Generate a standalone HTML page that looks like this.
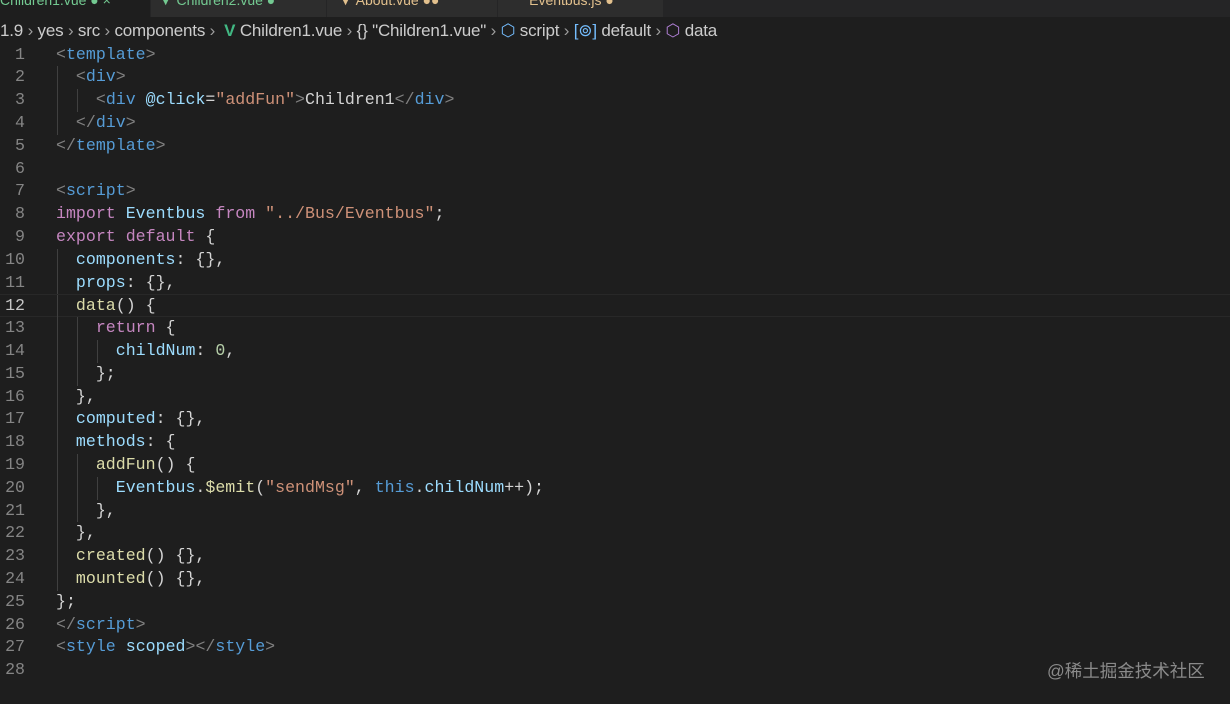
<!DOCTYPE html>
<html><head><meta charset="utf-8"><style>
body{margin:0;width:1230px;height:704px;background:#1e1e1e;overflow:hidden;position:relative;font-family:"Liberation Mono",monospace;}
.tabs{position:absolute;left:0;top:0;width:1230px;height:17px;background:#252526;}
.tab{position:absolute;top:0;height:17px;font:14px "Liberation Sans",sans-serif;line-height:0px;overflow:hidden;}
.bc{position:absolute;left:0;top:19px;height:24px;font:17px "Liberation Sans",sans-serif;color:#cccccc;line-height:24px;white-space:pre;letter-spacing:-0.2px;}
.bc .s{color:#9d9d9d}
.code{position:absolute;left:0;top:43.6px;width:1230px;}
.l{position:relative;height:22.8px;line-height:22.8px;font-size:16.6px;white-space:pre;color:#d4d4d4;}
.n{position:absolute;right:1205px;color:#858585;text-align:right;}
.c{position:absolute;left:56px;}
.cur{border-top:1px solid #282828;border-bottom:1px solid #282828;box-sizing:border-box;}
.cur .n{color:#c6c6c6}
.g{position:absolute;top:0;width:1px;height:22.8px;background:#404040;}
.p{color:#808080}.t{color:#569cd6}.a{color:#9cdcfe}.s{color:#ce9178}.k{color:#c586c0}.f{color:#dcdcaa}.num{color:#b5cea8}.v{color:#9cdcfe}
.wm{position:absolute;left:1047px;top:658px;font:17.5px "Liberation Sans","Noto Sans CJK SC",sans-serif;color:#8a8a8a;}
</style></head><body>
<div class="tabs">
<div class="tab" style="left:0;width:150px;background:#1e1e1e;color:#73c991">Children1.vue ● ×</div>
<div class="tab" style="left:151px;width:175px;background:#2d2d2d;color:#73c991">&nbsp;&nbsp;▼ Children2.vue ●</div>
<div class="tab" style="left:327px;width:170px;background:#2d2d2d;color:#e2c08d">&nbsp;&nbsp;&nbsp;▼ About.vue ●●</div>
<div class="tab" style="left:498px;width:165px;background:#2d2d2d;color:#e2c08d">&nbsp;&nbsp;&nbsp;&nbsp;&nbsp;&nbsp;&nbsp;&nbsp;Eventbus.js ●</div>
</div>
<div class="bc">1.9 <span class="s">›</span> yes <span class="s">›</span> src <span class="s">›</span> components <span class="s">›</span>  <span style="color:#41b883;font-weight:bold">V</span> Children1.vue <span class="s">›</span> {} "Children1.vue" <span class="s">›</span> <span style="color:#75beff">⬡</span> script <span class="s">›</span> <span style="color:#75beff">[⊚]</span> default <span class="s">›</span> <span style="color:#b180d7">⬡</span> data</div>
<div class="code">
<div class="l"><span class="n">1</span><span class="c"><span class="p">&lt;</span><span class="t">template</span><span class="p">&gt;</span></span></div>
<div class="l"><span class="n">2</span><span class="g" style="left:57px"></span><span class="c">  <span class="p">&lt;</span><span class="t">div</span><span class="p">&gt;</span></span></div>
<div class="l"><span class="n">3</span><span class="g" style="left:57px"></span><span class="g" style="left:77px"></span><span class="c">    <span class="p">&lt;</span><span class="t">div</span> <span class="a">@click</span>=<span class="s">"addFun"</span><span class="p">&gt;</span>Children1<span class="p">&lt;/</span><span class="t">div</span><span class="p">&gt;</span></span></div>
<div class="l"><span class="n">4</span><span class="g" style="left:57px"></span><span class="c">  <span class="p">&lt;/</span><span class="t">div</span><span class="p">&gt;</span></span></div>
<div class="l"><span class="n">5</span><span class="c"><span class="p">&lt;/</span><span class="t">template</span><span class="p">&gt;</span></span></div>
<div class="l"><span class="n">6</span></div>
<div class="l"><span class="n">7</span><span class="c"><span class="p">&lt;</span><span class="t">script</span><span class="p">&gt;</span></span></div>
<div class="l"><span class="n">8</span><span class="c"><span class="k">import</span> <span class="v">Eventbus</span> <span class="k">from</span> <span class="s">"../Bus/Eventbus"</span>;</span></div>
<div class="l"><span class="n">9</span><span class="c"><span class="k">export</span> <span class="k">default</span> {</span></div>
<div class="l"><span class="n">10</span><span class="g" style="left:57px"></span><span class="c">  <span class="v">components</span>: {},</span></div>
<div class="l"><span class="n">11</span><span class="g" style="left:57px"></span><span class="c">  <span class="v">props</span>: {},</span></div>
<div class="l cur"><span class="n">12</span><span class="g" style="left:57px"></span><span class="c">  <span class="f">data</span>() {</span></div>
<div class="l"><span class="n">13</span><span class="g" style="left:57px"></span><span class="g" style="left:77px"></span><span class="c">    <span class="k">return</span> {</span></div>
<div class="l"><span class="n">14</span><span class="g" style="left:57px"></span><span class="g" style="left:77px"></span><span class="g" style="left:97px"></span><span class="c">      <span class="v">childNum</span>: <span class="num">0</span>,</span></div>
<div class="l"><span class="n">15</span><span class="g" style="left:57px"></span><span class="g" style="left:77px"></span><span class="c">    };</span></div>
<div class="l"><span class="n">16</span><span class="g" style="left:57px"></span><span class="c">  },</span></div>
<div class="l"><span class="n">17</span><span class="g" style="left:57px"></span><span class="c">  <span class="v">computed</span>: {},</span></div>
<div class="l"><span class="n">18</span><span class="g" style="left:57px"></span><span class="c">  <span class="v">methods</span>: {</span></div>
<div class="l"><span class="n">19</span><span class="g" style="left:57px"></span><span class="g" style="left:77px"></span><span class="c">    <span class="f">addFun</span>() {</span></div>
<div class="l"><span class="n">20</span><span class="g" style="left:57px"></span><span class="g" style="left:77px"></span><span class="g" style="left:97px"></span><span class="c">      <span class="v">Eventbus</span>.<span class="f">$emit</span>(<span class="s">"sendMsg"</span>, <span class="t">this</span>.<span class="v">childNum</span>++);</span></div>
<div class="l"><span class="n">21</span><span class="g" style="left:57px"></span><span class="g" style="left:77px"></span><span class="c">    },</span></div>
<div class="l"><span class="n">22</span><span class="g" style="left:57px"></span><span class="c">  },</span></div>
<div class="l"><span class="n">23</span><span class="g" style="left:57px"></span><span class="c">  <span class="f">created</span>() {},</span></div>
<div class="l"><span class="n">24</span><span class="g" style="left:57px"></span><span class="c">  <span class="f">mounted</span>() {},</span></div>
<div class="l"><span class="n">25</span><span class="c">};</span></div>
<div class="l"><span class="n">26</span><span class="c"><span class="p">&lt;/</span><span class="t">script</span><span class="p">&gt;</span></span></div>
<div class="l"><span class="n">27</span><span class="c"><span class="p">&lt;</span><span class="t">style</span> <span class="a">scoped</span><span class="p">&gt;&lt;/</span><span class="t">style</span><span class="p">&gt;</span></span></div>
<div class="l"><span class="n">28</span></div>
</div>
<div class="wm">@稀土掘金技术社区</div>
</body></html>
